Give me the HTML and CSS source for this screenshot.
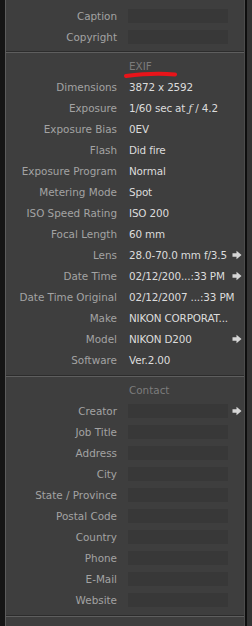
FILE: index.html
```html
<!DOCTYPE html>
<html lang="en">
<head>
    <meta charset="UTF-8">
    <title>Metadata</title>
    <link rel="stylesheet" href="styles.css">
</head>
<body>
<div class="frame">
    <div class="edge-left"></div>
    <div class="panel">
        <div class="section first">
            <div class="row"><span class="label">Caption</span><span class="field"></span></div>
            <div class="row"><span class="label">Copyright</span><span class="field"></span></div>
        </div>
        <div class="divider"></div>
        <div class="section">
            <div class="row head"><span class="label"></span><span class="title">EXIF</span>
                <svg class="mark" width="56" height="8" viewBox="0 0 56 8"><path d="M3 5 C 18 3, 38 2, 52 3.5" stroke="#e8141a" stroke-width="4" stroke-linecap="round" fill="none"/></svg>
            </div>
            <div class="row"><span class="label">Dimensions</span><span class="value">3872 x 2592</span></div>
            <div class="row"><span class="label">Exposure</span><span class="value">1/60 sec at <i>ƒ</i> / 4.2</span></div>
            <div class="row"><span class="label">Exposure Bias</span><span class="value">0EV</span></div>
            <div class="row"><span class="label">Flash</span><span class="value">Did fire</span></div>
            <div class="row"><span class="label">Exposure Program</span><span class="value">Normal</span></div>
            <div class="row"><span class="label">Metering Mode</span><span class="value">Spot</span></div>
            <div class="row"><span class="label">ISO Speed Rating</span><span class="value">ISO 200</span></div>
            <div class="row"><span class="label">Focal Length</span><span class="value">60 mm</span></div>
            <div class="row"><span class="label">Lens</span><span class="value">28.0-70.0 mm f/3.5</span><svg class="go" width="10" height="10" viewBox="0 0 10 10"><path d="M0.5 3.2 H4.5 V0.8 L9.5 5 L4.5 9.2 V6.8 H0.5 Z" fill="#d6d6d6"/></svg></div>
            <div class="row"><span class="label">Date Time</span><span class="value">02/12/200...:33 PM</span><svg class="go" width="10" height="10" viewBox="0 0 10 10"><path d="M0.5 3.2 H4.5 V0.8 L9.5 5 L4.5 9.2 V6.8 H0.5 Z" fill="#d6d6d6"/></svg></div>
            <div class="row"><span class="label">Date Time Original</span><span class="value">02/12/2007 ...:33 PM</span></div>
            <div class="row"><span class="label">Make</span><span class="value">NIKON CORPORAT...</span></div>
            <div class="row"><span class="label">Model</span><span class="value">NIKON D200</span><svg class="go" width="10" height="10" viewBox="0 0 10 10"><path d="M0.5 3.2 H4.5 V0.8 L9.5 5 L4.5 9.2 V6.8 H0.5 Z" fill="#d6d6d6"/></svg></div>
            <div class="row"><span class="label">Software</span><span class="value">Ver.2.00</span></div>
        </div>
        <div class="divider"></div>
        <div class="section">
            <div class="row head"><span class="label"></span><span class="title">Contact</span></div>
            <div class="row"><span class="label">Creator</span><span class="field"></span><svg class="go" width="10" height="10" viewBox="0 0 10 10"><path d="M0.5 3.2 H4.5 V0.8 L9.5 5 L4.5 9.2 V6.8 H0.5 Z" fill="#d6d6d6"/></svg></div>
            <div class="row"><span class="label">Job Title</span><span class="field"></span></div>
            <div class="row"><span class="label">Address</span><span class="field"></span></div>
            <div class="row"><span class="label">City</span><span class="field"></span></div>
            <div class="row"><span class="label">State / Province</span><span class="field"></span></div>
            <div class="row"><span class="label">Postal Code</span><span class="field"></span></div>
            <div class="row"><span class="label">Country</span><span class="field"></span></div>
            <div class="row"><span class="label">Phone</span><span class="field"></span></div>
            <div class="row"><span class="label">E-Mail</span><span class="field"></span></div>
            <div class="row"><span class="label">Website</span><span class="field"></span></div>
        </div>
        <div class="divider"></div>
    </div>
    <div class="edge-right"></div>
</div>
</body>
</html>
```

FILE: styles.css
```css
body { margin: 0; background: #141414; font-family: "DejaVu Sans", sans-serif; font-size: 10.4px; }
.frame { display: flex; height: 626px; }
.edge-left { width: 5px; background: #151515; }
.panel { flex: 1; background: #3e3e3e; border-left: 1px solid #5c5c5c; border-right: 1px solid #4c4c4c; }
.edge-right { width: 7px; border-left: 2px solid #0e0e0e; background: #333; box-sizing: border-box; }
.section { padding: 2px 0 5px; }
.section.first { padding-top: 5px; padding-bottom: 4px; }
.divider { border-top: 1px solid #2c2c2c; border-bottom: 1px solid #5e5e5e; }
.row { display: flex; align-items: center; height: 21px; padding-right: 2px; position: relative; }
.label { width: 111px; flex: none; text-align: right; color: #a3a3a3; white-space: nowrap; }
.value { margin-left: 12px; color: #dcdcdc; white-space: nowrap; letter-spacing: -0.15px; }
.value i { font-family: "DejaVu Serif", serif; }
.field { margin-left: 11px; width: 100px; height: 14px; background: #383838; }
.title { margin-left: 12px; color: #7c7c7c; }
.go { margin-left: auto; flex: none; }
.mark { position: absolute; left: 117px; top: 16px; }
```
